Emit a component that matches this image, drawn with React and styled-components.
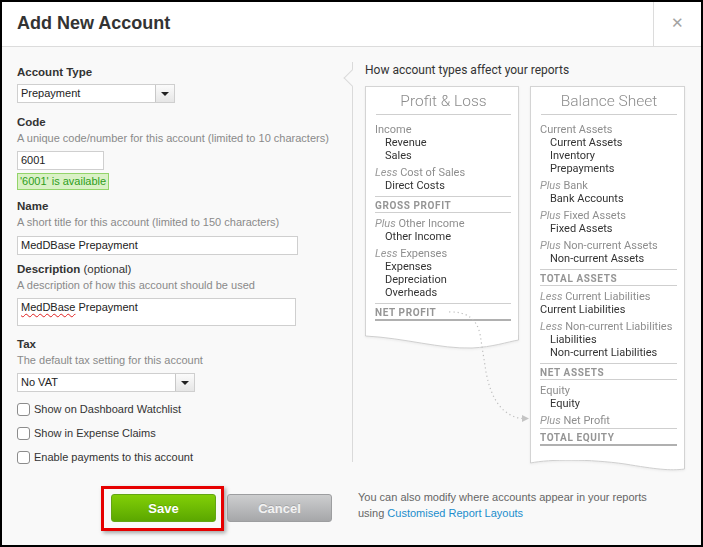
import React from 'react';
import styled, { createGlobalStyle } from 'styled-components';

const GlobalStyle = createGlobalStyle`
    html, body {
        margin: 0;
        padding: 0;
        background: #000;
    }
    * {
        box-sizing: border-box;
    }
`;

const Dialog = styled.div`
    width: 703px;
    height: 547px;
    border: 2px solid #000;
    background: #f9f9f9;
    font-family: "Liberation Sans", Arial, sans-serif;
    color: #333;
    overflow: hidden;
`;

const Header = styled.div`
    display: flex;
    height: 45px;
    background: #fff;
    border-bottom: 1px solid #dcdcdc;
`;

const Title = styled.h1`
    flex: 1;
    margin: 0;
    padding-left: 15px;
    font-size: 18px;
    font-weight: bold;
    line-height: 42px;
    color: #333;
`;

const CloseButton = styled.div`
    width: 48px;
    border-left: 1px solid #dcdcdc;
    display: flex;
    align-items: center;
    justify-content: center;
    color: #a3a3a3;
    font-size: 15px;
    padding-bottom: 3px;
`;

const Body = styled.div`
    display: grid;
    grid-template-columns: 320px 1fr;
    grid-template-rows: 407px auto;
    column-gap: 15px;
    row-gap: 17px;
    padding: 15px 0 0 15px;
`;

const Form = styled.div`
    display: flex;
    flex-direction: column;
    align-items: flex-start;
    padding-top: 2px;
    font-size: 11px;
`;

const Label = styled.div`
    font-size: 11.5px;
    font-weight: bold;
    line-height: 16px;
    margin-top: ${p => p.$gap || 0}px;
    color: #333;

    span {
        font-weight: normal;
    }
`;

const Help = styled.div`
    font-size: 11px;
    line-height: 17px;
    white-space: nowrap;
    color: #8a8a8a;
`;

const SelectBox = styled.div`
    display: flex;
    width: ${p => p.$width}px;
    height: 19px;
    margin-top: 4px;
    background: #fff;
    border: 1px solid #cfcfcf;
`;

const SelectValue = styled.div`
    flex: 1;
    padding-left: 3px;
    line-height: 17px;
    color: #222;
`;

const SelectArrow = styled.div`
    width: 19px;
    border-left: 1px solid #c8c8c8;
    background: linear-gradient(#fbfbfb, #e6e6e6);
    display: flex;
    align-items: center;
    justify-content: center;

    &::after {
        content: '';
        border-left: 4px solid transparent;
        border-right: 4px solid transparent;
        border-top: 4px solid #222;
    }
`;

const TextInput = styled.div`
    width: ${p => p.$width}px;
    height: ${p => p.$height || 19}px;
    margin-top: ${p => p.$gap || 4}px;
    background: #fff;
    border: 1px solid #cfcfcf;
    padding-left: 3px;
    line-height: 17px;
    color: #222;
`;

const Squiggle = styled.span`
    text-decoration: underline wavy #e02020;
    text-decoration-thickness: 1px;
    text-underline-offset: 2px;
`;

const Available = styled.div`
    margin-top: 3px;
    height: 17px;
    padding: 0 2px;
    background: #daf1c6;
    border: 1px solid #93d46a;
    color: #2e9e1b;
    line-height: 15px;
`;

const CheckRow = styled.label`
    display: flex;
    align-items: center;
    height: 24px;
    margin-top: ${p => p.$gap || 0}px;
    color: #333;
`;

const Checkbox = styled.span`
    width: 13px;
    height: 13px;
    margin-right: 4px;
    background: #fff;
    border: 1px solid #8c8c8c;
    border-radius: 3px;
`;

const Panel = styled.div`
    position: relative;
    height: 400px;
    border-left: 1px solid #dadada;
    padding-left: 12px;
    font-family: Roboto, "Noto Sans", sans-serif;

    &::before {
        content: '';
        position: absolute;
        left: -7px;
        top: 10px;
        width: 11px;
        height: 11px;
        background: #f9f9f9;
        border-left: 1px solid #dadada;
        border-bottom: 1px solid #dadada;
        transform: rotate(45deg);
    }
`;

const PanelTitle = styled.div`
    font-size: 12px;
    line-height: 16px;
    color: #333;
`;

const Reports = styled.div`
    display: flex;
    align-items: flex-start;
    gap: 11px;
    margin-top: 8px;
`;

const Paper = styled.div`
    width: ${p => p.$width}px;
    filter: drop-shadow(0 1px 1px rgba(0, 0, 0, 0.06));
`;

const Sheet = styled.div`
    background: #fff;
    border: 1px solid #d4d4d4;
    border-bottom: none;
    padding: 0 7px 10px 9px;
`;

const SheetTitle = styled.div`
    margin: 0 0 8px 1px;
    padding: 5px 0 3px;
    border-bottom: 1px solid #cfcfcf;
    text-align: center;
    font-size: 15.5px;
    font-weight: 300;
    line-height: 19px;
    color: #8c8c8c;
`;

const Group = styled.div`
    margin-bottom: ${p => (p.$tight ? 1 : 4)}px;
`;

const Line = styled.div`
    font-size: 11px;
    line-height: 13px;
    white-space: nowrap;
    color: ${p => (p.$head ? '#8e8e8e' : '#333')};
    padding-left: ${p => (p.$indent ? 10 : 0)}px;

    em {
        font-style: italic;
        color: #999;
    }
`;

const Total = styled.div`
    margin-bottom: 4px;
    padding: 2px 0 0;
    border-top: 1px solid #cfcfcf;
    border-bottom: ${p => (p.$final ? '2px solid #b0b0b0' : '1px solid #cfcfcf')};
    font-size: 10px;
    font-weight: bold;
    letter-spacing: 0.6px;
    line-height: 13px;
    color: #959595;
`;

const Edge = styled.svg`
    display: block;
`;

const Arrow = styled.svg`
    position: absolute;
    left: 0;
    top: 0;
    pointer-events: none;
`;

const Actions = styled.div`
    display: flex;
    justify-content: flex-end;
    align-items: flex-start;
    padding-right: 5px;
    gap: 3px;
`;

const Highlight = styled.div`
    padding: 5px 5px 6px 7px;
    border: 3px solid #e60000;
    box-shadow: 2px 2px 4px rgba(0, 0, 0, 0.35);
`;

const Button = styled.button`
    width: 105px;
    height: 28px;
    margin-top: ${p => (p.$primary ? 0 : 8)}px;
    border-radius: 3px;
    border: 1px solid ${p => (p.$primary ? '#63a514' : '#9d9ea0')};
    background: ${p => (p.$primary
        ? 'linear-gradient(#82cf07, #5ba700)'
        : 'linear-gradient(#cdcecf, #a6a7a9)')};
    color: ${p => (p.$primary ? '#fff' : '#f3f3f3')};
    font-family: "Liberation Sans", Arial, sans-serif;
    font-size: 13px;
    font-weight: bold;
    text-shadow: 0 -1px 0 rgba(0, 0, 0, 0.15);
    padding: 0;
`;

const Note = styled.div`
    padding: 3px 0 0 6px;
    font-size: 11px;
    line-height: 16px;
    color: #666;

    a {
        color: #1b8dcc;
        text-decoration: none;
    }
`;

const profitLoss = [
    { type: 'group', lines: [['head', 'Income'], ['item', 'Revenue'], ['item', 'Sales']] },
    { type: 'group', lines: [['head', 'Cost of Sales', 'Less'], ['item', 'Direct Costs']] },
    { type: 'total', label: 'Gross Profit' },
    { type: 'group', lines: [['head', 'Other Income', 'Plus'], ['item', 'Other Income']] },
    { type: 'group', lines: [['head', 'Expenses', 'Less'], ['item', 'Expenses'], ['item', 'Depreciation'], ['item', 'Overheads']] },
    { type: 'total', label: 'Net Profit', final: true },
];

const balanceSheet = [
    { type: 'group', lines: [['head', 'Current Assets'], ['item', 'Current Assets'], ['item', 'Inventory'], ['item', 'Prepayments']] },
    { type: 'group', lines: [['head', 'Bank', 'Plus'], ['item', 'Bank Accounts']] },
    { type: 'group', lines: [['head', 'Fixed Assets', 'Plus'], ['item', 'Fixed Assets']] },
    { type: 'group', lines: [['head', 'Non-current Assets', 'Plus'], ['item', 'Non-current Assets']] },
    { type: 'total', label: 'Total Assets' },
    { type: 'group', lines: [['head', 'Current Liabilities', 'Less'], ['flat', 'Current Liabilities']] },
    { type: 'group', lines: [['head', 'Non-current Liabilities', 'Less'], ['item', 'Liabilities'], ['item', 'Non-current Liabilities']] },
    { type: 'total', label: 'Net Assets' },
    { type: 'group', lines: [['head', 'Equity'], ['item', 'Equity']] },
    { type: 'group', tight: true, lines: [['head', 'Net Profit', 'Plus']] },
    { type: 'total', label: 'Total Equity', final: true },
];

function PaperEdge({ width, curve }) {
    const [y0, c1, c2, mid, c3, c4, y1] = curve;
    const w = width;
    const d = `M0.5,0 L0.5,${y0} C${c1[0]},${c1[1]} ${c2[0]},${c2[1]} ${mid[0]},${mid[1]} C${c3[0]},${c3[1]} ${c4[0]},${c4[1]} ${w - 0.5},${y1} L${w - 0.5},0`;
    return (
        <Edge width={w} height={16} viewBox={`0 0 ${w} 16`}>
            <path d={d + ' Z'} fill="#fff" />
            <path d={d} fill="none" stroke="#cfcfcf" strokeWidth="1" />
        </Edge>
    );
}

function Report({ title, rows, width, curve }) {
    return (
        <Paper $width={width}>
            <Sheet>
                <SheetTitle>{title}</SheetTitle>
                {rows.map((row, index) => {
                    if (row.type === 'total') {
                        return <Total key={index} $final={row.final}>{row.label.toUpperCase()}</Total>;
                    }
                    return (
                        <Group key={index} $tight={row.tight}>
                            {row.lines.map(([kind, text, prefix], i) => (
                                <Line key={i} $head={kind === 'head'} $indent={kind === 'item'}>
                                    {prefix && <em>{prefix} </em>}
                                    {text}
                                </Line>
                            ))}
                        </Group>
                    );
                })}
            </Sheet>
            <PaperEdge width={width} curve={curve} />
        </Paper>
    );
}

export default function App() {
    return (
        <>
            <GlobalStyle />
            <Dialog>
                <Header>
                    <Title>Add New Account</Title>
                    <CloseButton>✕</CloseButton>
                </Header>
                <Body>
                    <Form>
                        <Label>Account Type</Label>
                        <SelectBox $width={158}>
                            <SelectValue>Prepayment</SelectValue>
                            <SelectArrow />
                        </SelectBox>

                        <Label $gap={11}>Code</Label>
                        <Help>A unique code/number for this account (limited to 10 characters)</Help>
                        <TextInput $width={87}>6001</TextInput>
                        <Available>'6001' is available</Available>

                        <Label $gap={8}>Name</Label>
                        <Help>A short title for this account (limited to 150 characters)</Help>
                        <TextInput $width={281} $gap={5}>MedDBase Prepayment</TextInput>

                        <Label $gap={6}>Description <span>(optional)</span></Label>
                        <Help>A description of how this account should be used</Help>
                        <TextInput $width={279} $height={28}>
                            <Squiggle>MedDBase</Squiggle> Prepayment
                        </TextInput>

                        <Label $gap={10}>Tax</Label>
                        <Help>The default tax setting for this account</Help>
                        <SelectBox $width={178}>
                            <SelectValue>No VAT</SelectValue>
                            <SelectArrow />
                        </SelectBox>

                        <CheckRow $gap={5}><Checkbox />Show on Dashboard Watchlist</CheckRow>
                        <CheckRow><Checkbox />Show in Expense Claims</CheckRow>
                        <CheckRow><Checkbox />Enable payments to this account</CheckRow>
                    </Form>

                    <Panel>
                        <PanelTitle>How account types affect your reports</PanelTitle>
                        <Reports>
                            <Report
                                title="Profit & Loss"
                                rows={profitLoss}
                                width={154}
                                curve={[1, [40, 3], [75, 14], [107, 13], [128, 12], [142, 7], 5]}
                            />
                            <Report
                                title="Balance Sheet"
                                rows={balanceSheet}
                                width={155}
                                curve={[3, [20, -1], [60, -1], [95, 4], [125, 9], [140, 11], 9]}
                            />
                        </Reports>
                        <Arrow width={351} height={400} viewBox="352 62 351 400">
                            <path
                                d="M448 312 Q474 311 479 334 L485 372 Q493 415 521 418.5"
                                fill="none"
                                stroke="#bdbdbd"
                                strokeWidth="1.2"
                                strokeDasharray="1.2 3"
                            />
                            <polygon points="521,415 528,418.5 521,422" fill="#c4c4c4" />
                        </Arrow>
                    </Panel>

                    <Actions>
                        <Highlight>
                            <Button $primary>Save</Button>
                        </Highlight>
                        <Button>Cancel</Button>
                    </Actions>
                    <Note>
                        You can also modify where accounts appear in your reports
                        <br />
                        using <a href="#layouts">Customised Report Layouts</a>
                    </Note>
                </Body>
            </Dialog>
        </>
    );
}
